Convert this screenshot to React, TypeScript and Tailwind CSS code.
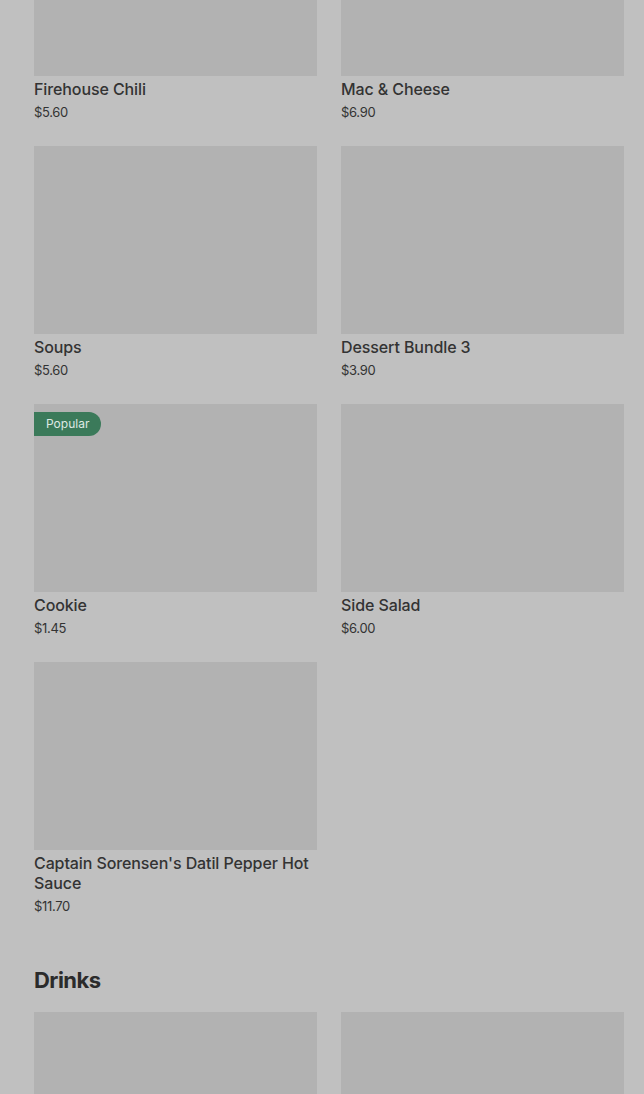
const items = [
  { name: 'Firehouse Chili', price: '$5.60' },
  { name: 'Mac & Cheese', price: '$6.90' },
  { name: 'Soups', price: '$5.60' },
  { name: 'Dessert Bundle 3', price: '$3.90' },
  { name: 'Cookie', price: '$1.45', popular: true },
  { name: 'Side Salad', price: '$6.00' },
  { name: "Captain Sorensen's Datil Pepper Hot Sauce", price: '$11.70' },
]

const Card = ({ name, price, popular }: { name: string; price: string; popular?: boolean }) => (
  <div className="pb-6">
    <div className="relative h-[188px] bg-[#b2b2b2]">
      {popular && (
        <span className="absolute left-0 top-2 h-6 px-3 flex items-center rounded-r-full bg-[#3b7a5a] text-[12px] text-[#dfe9e3]">
          Popular
        </span>
      )}
    </div>
    <div className="mt-[3px] text-[16px] leading-5 font-medium tracking-[-0.1px] text-[#333333]">{name}</div>
    <div className="mt-[3px] text-[13px] leading-5 tracking-tight text-[#333333]">{price}</div>
  </div>
)

export default function App() {
  return (
    <div className="h-[1094px] overflow-hidden bg-[#c0c0c0] pl-[34px] pr-[20px]" style={{ fontFamily: 'Inter, "Liberation Sans", sans-serif' }}>
      <div className="-mt-[112px] grid grid-cols-2 gap-x-6">
        {items.map((it) => (
          <Card key={it.name} {...it} />
        ))}
      </div>
      <h2 className="mt-6 mb-4 text-[22px] leading-8 font-bold tracking-tight text-[#2b2b2b]">Drinks</h2>
      <div className="grid grid-cols-2 gap-x-6">
        <div className="h-[188px] bg-[#b2b2b2]" />
        <div className="h-[188px] bg-[#b2b2b2]" />
      </div>
    </div>
  )
}
